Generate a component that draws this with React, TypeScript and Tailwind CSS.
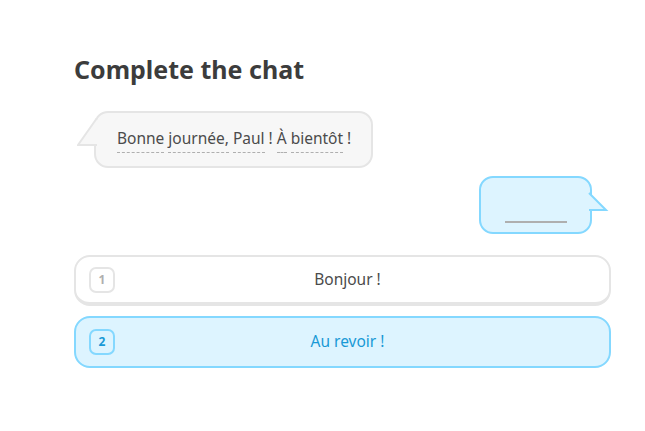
const options = [
  { n: 1, label: "Bonjour !", selected: false },
  { n: 2, label: "Au revoir !", selected: true },
];

const words = [
  { w: "Bonne", u: true },
  { w: "journée,", u: true },
  { w: "Paul", u: true },
  { w: "!", u: false },
  { w: "À", u: true },
  { w: "bientôt", u: true },
  { w: "!", u: false },
];

export default function App() {
  return (
    <div
      className="min-h-[431px] w-[645px] bg-white"
      style={{ fontFamily: '"Noto Sans", "DejaVu Sans", sans-serif' }}
    >
      <div className="ml-[74px] w-[537px] pt-[52px]">
        <h1 className="text-[25px] font-bold leading-[34px] text-[#3c3c3c]">Complete the chat</h1>

        {/* incoming bubble */}
        <div className="mt-[25px] flex pl-[20px]">
          <div className="relative rounded-[14px] border-2 border-[#e5e5e5] bg-[#f7f7f7] py-[13px] pl-[21px] pr-[20px]">
            <svg className="absolute left-[-19px] top-[4px]" width="21" height="30" viewBox="0 0 21 30">
              <path d="M20 0 L1 28 L20 28 Z" fill="#f7f7f7" />
              <path d="M20 1 L1 28 L20 28" fill="none" stroke="#e5e5e5" strokeWidth="2" />
            </svg>
            <p className="flex gap-x-[4px] text-[15.5px] leading-[24px] text-[#4b4b4b]">
              {words.map((x, i) => (
                <span
                  key={i}
                  className={
                    x.u
                      ? "border-b border-dashed border-[#afafaf] pb-[2px]"
                      : "border-b border-transparent pb-[2px]"
                  }
                >
                  {x.w}
                </span>
              ))}
            </p>
          </div>
        </div>

        {/* outgoing bubble */}
        <div className="mt-[8px] flex justify-end pr-[19px]">
          <div className="relative flex h-[58px] w-[113px] items-end justify-center rounded-[14px] border-2 border-[#84d8ff] bg-[#ddf4ff] pb-[9px]">
            <div className="h-[2px] w-[62px] bg-[#afafaf]" />
            <svg className="absolute right-[-19px] top-[14px]" width="21" height="20" viewBox="0 0 21 20">
              <path d="M0 0 L18 18 L0 18 Z" fill="#ddf4ff" />
              <path d="M1 1 L18 18 L1 18" fill="none" stroke="#84d8ff" strokeWidth="2" />
            </svg>
          </div>
        </div>

        {/* options */}
        <div className="mt-[21px] flex flex-col gap-[10px]">
          {options.map((o) =>
            o.selected ? (
              <div
                key={o.n}
                className="flex h-[52px] items-center rounded-[16px] border-2 border-[#84d8ff] bg-[#ddf4ff] px-[13px]"
              >
                <span className="flex h-[26px] w-[26px] items-center justify-center rounded-[7px] border-2 border-[#84d8ff] text-[12px] font-bold text-[#1899d6]">
                  {o.n}
                </span>
                <span className="flex-1 pr-[16px] text-center text-[15.5px] text-[#1899d6]">{o.label}</span>
              </div>
            ) : (
              <div
                key={o.n}
                className="flex h-[51px] items-center rounded-[16px] border-2 border-b-4 border-[#e5e5e5] bg-white px-[13px]"
              >
                <span className="flex h-[26px] w-[26px] items-center justify-center rounded-[7px] border-2 border-[#e5e5e5] text-[12px] font-bold text-[#afafaf]">
                  {o.n}
                </span>
                <span className="flex-1 pr-[16px] text-center text-[15.5px] text-[#4b4b4b]">{o.label}</span>
              </div>
            )
          )}
        </div>
      </div>
    </div>
  );
}
